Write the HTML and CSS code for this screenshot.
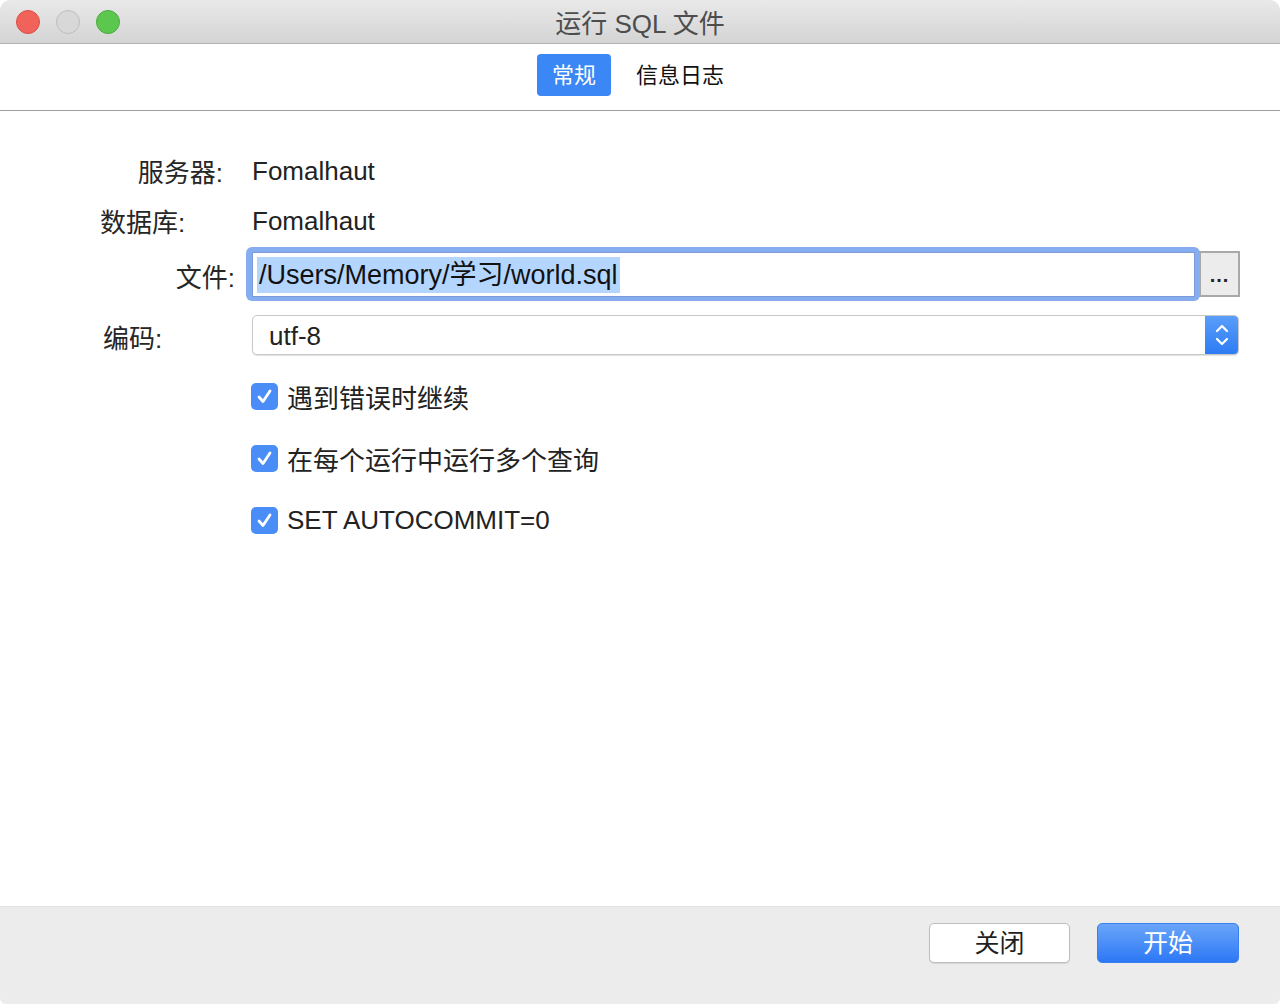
FILE: index.html
```html
<!DOCTYPE html>
<html lang="zh-CN">
<head>
<meta charset="utf-8">
<title>运行 SQL 文件</title>
<link rel="stylesheet" href="styles.css">
</head>
<body>
<div class="window">
  <header class="titlebar">
    <div class="lights">
      <span class="light red"></span>
      <span class="light gray"></span>
      <span class="light green"></span>
    </div>
    <div class="title">运行 SQL 文件</div>
  </header>
  <nav class="toolbar">
    <span class="tab active">常规</span>
    <span class="tab">信息日志</span>
  </nav>
  <main class="content">
    <div class="row row-server">
      <div class="label label-server">服务器:</div>
      <div class="value">Fomalhaut</div>
    </div>
    <div class="row row-db">
      <div class="label label-db">数据库:</div>
      <div class="value">Fomalhaut</div>
    </div>
    <div class="row row-file">
      <div class="label label-file">文件:</div>
      <div class="file-ring">
        <div class="file-input"><span class="sel">/Users/Memory/学习/world.sql</span></div>
      </div>
      <div class="browse">...</div>
    </div>
    <div class="row row-enc">
      <div class="label label-enc">编码:</div>
      <div class="select">
        <span class="select-text">utf-8</span>
        <span class="select-arrows">
          <svg width="16" height="26" viewBox="0 0 16 26"><path d="M3 9 L8 4 L13 9" fill="none" stroke="#fff" stroke-width="2.2" stroke-linecap="round" stroke-linejoin="round"/><path d="M3 17 L8 22 L13 17" fill="none" stroke="#fff" stroke-width="2.2" stroke-linecap="round" stroke-linejoin="round"/></svg>
        </span>
      </div>
    </div>
    <div class="checks">
      <div class="check-row"><span class="box"><svg width="19" height="19" viewBox="0 0 19 19"><path d="M4 10 L8 14.5 L15 4" fill="none" stroke="#fff" stroke-width="2.8" stroke-linecap="round" stroke-linejoin="round"/></svg></span><span class="check-label">遇到错误时继续</span></div>
      <div class="check-row"><span class="box"><svg width="19" height="19" viewBox="0 0 19 19"><path d="M4 10 L8 14.5 L15 4" fill="none" stroke="#fff" stroke-width="2.8" stroke-linecap="round" stroke-linejoin="round"/></svg></span><span class="check-label">在每个运行中运行多个查询</span></div>
      <div class="check-row"><span class="box"><svg width="19" height="19" viewBox="0 0 19 19"><path d="M4 10 L8 14.5 L15 4" fill="none" stroke="#fff" stroke-width="2.8" stroke-linecap="round" stroke-linejoin="round"/></svg></span><span class="check-label">SET AUTOCOMMIT=0</span></div>
    </div>
  </main>
  <footer class="footer">
    <button class="btn btn-close">关闭</button>
    <button class="btn btn-start">开始</button>
  </footer>
</div>
</body>
</html>
```
FILE: styles.css
```css
* { box-sizing: border-box; }
html, body { margin: 0; padding: 0; background: #fff; }
body {
  font-family: "Liberation Sans", "Noto Sans CJK SC", sans-serif;
  color: #1f1f1f;
}
.window {
  width: 1280px;
  height: 1004px;
  display: flex;
  flex-direction: column;
  border-radius: 10px 10px 6px 6px;
  overflow: hidden;
  background: #fff;
}
.titlebar {
  height: 44px;
  flex: none;
  background: linear-gradient(#e9e9e9, #d4d4d4);
  border-bottom: 1px solid #b2b2b2;
  display: flex;
  align-items: center;
  justify-content: center;
  position: relative;
}
.lights {
  position: absolute;
  left: 16px;
  top: 10px;
  display: flex;
  gap: 16px;
}
.light {
  width: 24px;
  height: 24px;
  border-radius: 50%;
  display: block;
}
.red { background: #f0625a; border: 1px solid #de4f47; }
.gray { background: #d8d8d8; border: 1px solid #bdbdbd; }
.green { background: #5cc74f; border: 1px solid #4aab3e; }
.title {
  font-size: 26px;
  color: #4d4d4d;
  margin-top: -1px;
}
.toolbar {
  height: 67px;
  flex: none;
  border-bottom: 1px solid #9f9f9f;
  display: flex;
  align-items: flex-start;
  justify-content: center;
  padding-top: 10px;
  padding-right: 4px;
  gap: 10px;
}
.tab {
  height: 42px;
  padding: 2px 15px 0;
  font-size: 22px;
  line-height: 40px;
  color: #111;
  border-radius: 4px;
}
.tab.active {
  background: #3b87f5;
  color: #fff;
}
.content {
  flex: 1;
  padding-top: 34px;
  background: #fff;
}
.row {
  display: flex;
  align-items: center;
}
.label {
  width: 252px;
  flex: none;
  font-size: 26px;
  color: #262626;
}
.value {
  font-size: 26px;
  color: #222;
  padding-top: 2px;
}
.row-server, .row-db { height: 50px; }
.label-server { text-align: right; padding-right: 29px; }
.label-db { padding-left: 100px; }
.row-file { height: 54px; margin-top: 2px; }
.label-file { width: 246px; text-align: right; padding-right: 11px; padding-top: 2px; }
.file-ring {
  width: 954px;
  height: 54px;
  border-radius: 6px;
  background: #86adf0;
  padding: 5px 5px 4px 6px;
}
.file-input {
  height: 100%;
  background: #fff;
  border: 1px solid #7a9ad8;
  padding: 4px 0 0 4px;
  font-size: 27px;
  line-height: 37px;
  color: #111;
  white-space: nowrap;
}
.sel {
  background: #b4d6fe;
  display: inline-block;
  height: 36px;
  padding: 0 2px;
  vertical-align: top;
}
.browse {
  width: 41px;
  height: 46px;
  margin-top: -1px;
  margin-left: -1px;
  background: #ececec;
  border: 2px solid #a9a9a9;
  font-size: 20px;
  font-weight: bold;
  line-height: 44px;
  text-align: center;
  color: #222;
  letter-spacing: 1px;
}
.row-enc { height: 40px; margin-top: 14px; }
.label-enc { padding-left: 103px; padding-top: 2px; }
.select {
  width: 987px;
  height: 40px;
  border: 1px solid #c8c8c8;
  border-radius: 5px;
  display: flex;
  align-items: center;
  justify-content: space-between;
  overflow: hidden;
  background: #fff;
  box-shadow: 0 1px 1px rgba(0,0,0,0.12);
}
.select-text {
  font-size: 26px;
  padding-left: 16px;
  padding-top: 3px;
  color: #222;
}
.select-arrows {
  width: 33px;
  height: 40px;
  background: linear-gradient(#5a9ff9, #2d7bf5);
  display: flex;
  align-items: center;
  justify-content: center;
}
.checks {
  margin-top: 11px;
  padding-left: 251px;
}
.check-row {
  height: 62px;
  display: flex;
  align-items: center;
}
.box {
  width: 27px;
  height: 27px;
  border-radius: 5px;
  background: #4a8df6;
  display: flex;
  align-items: center;
  justify-content: center;
  margin-right: 9px;
  margin-top: -2px;
}
.check-label {
  font-size: 26px;
  color: #222;
  margin-top: -1px;
}
.footer {
  height: 98px;
  flex: none;
  background: #ececec;
  border-top: 1px solid #e2e2e2;
  display: flex;
  justify-content: flex-end;
  align-items: flex-start;
  padding-top: 16px;
  padding-right: 41px;
  gap: 27px;
}
.btn {
  width: 141px;
  height: 40px;
  border-radius: 5px;
  font-family: "Liberation Sans", "Noto Sans CJK SC", sans-serif;
  font-size: 25px;
  line-height: 36px;
  padding: 0;
}
.btn-close {
  background: #fff;
  border: 1px solid #bdbdbd;
  color: #1f1f1f;
  box-shadow: 0 1px 1px rgba(0,0,0,0.1);
}
.btn-start {
  width: 142px;
  background: linear-gradient(#6aa5f9, #2c78f5);
  border: 1px solid #3b7ff0;
  color: #fff;
}
```
